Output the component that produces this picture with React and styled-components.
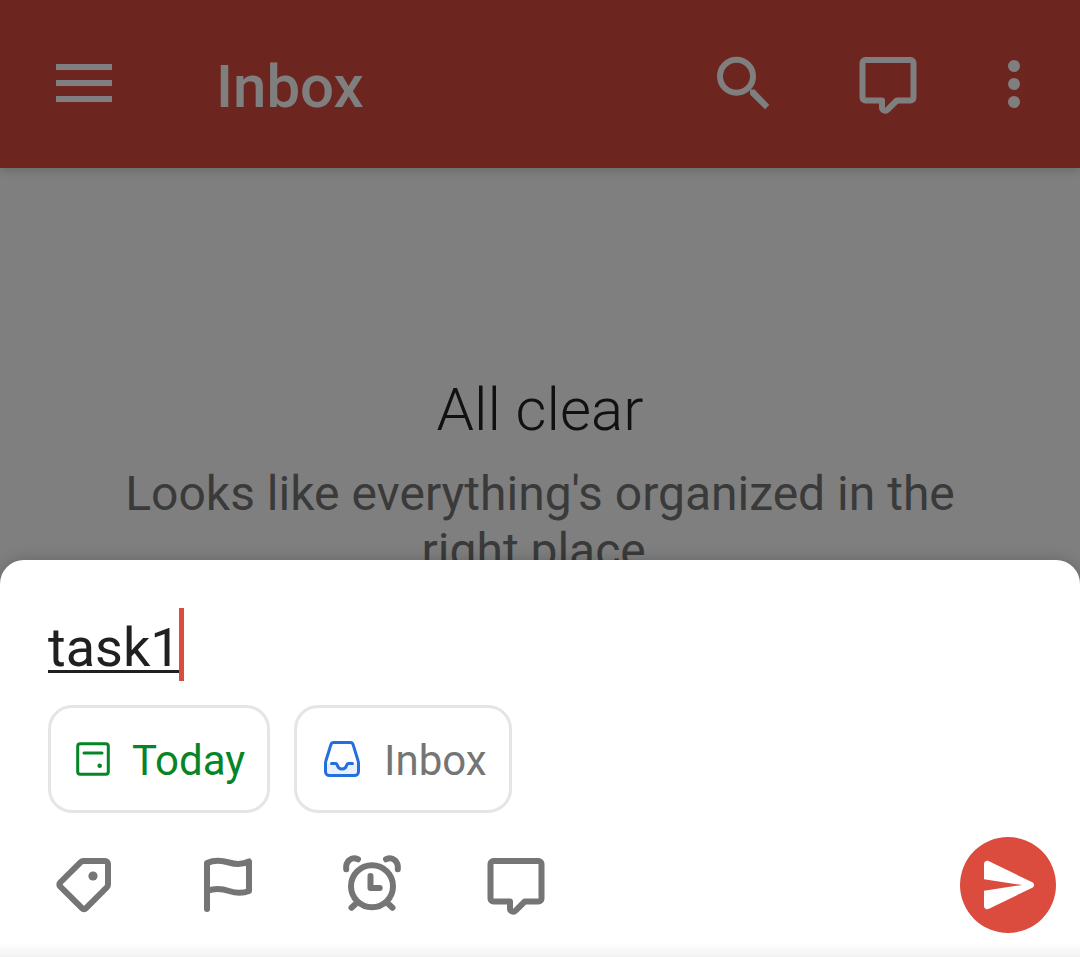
import React, { useState } from 'react';
import styled, { createGlobalStyle } from 'styled-components';

const GlobalStyle = createGlobalStyle`
  *, *::before, *::after { box-sizing: border-box; }
  body {
    margin: 0;
    background: #ffffff;
    font-family: Roboto, "Liberation Sans", sans-serif;
  }
  button, input { font: inherit; }
`;

const Screen = styled.div`
  position: relative;
  display: flex;
  flex-direction: column;
  min-height: 100vh;
  overflow: hidden;
`;

const AppBar = styled.header`
  display: flex;
  align-items: center;
  height: 168px;
  padding: 0 12px;
  background: #db4c3f;
  color: #ffffff;
  box-shadow: 0 2px 10px rgba(0, 0, 0, 0.2);
`;

const Title = styled.h1`
  flex: 1;
  margin: 0 0 0 60px;
  padding-top: 6px;
  font-size: 60px;
  font-weight: 500;
  line-height: 72px;
`;

const IconButton = styled.button`
  display: flex;
  align-items: center;
  justify-content: center;
  flex: none;
  width: ${({ $narrow }) => ($narrow ? '108px' : '144px')};
  height: 96px;
  padding: 0;
  border: 0;
  background: none;
  color: inherit;
  cursor: pointer;
`;

const Icon = styled.svg`
  display: block;
  flex: none;
  width: ${({ $size }) => $size || 72}px;
  height: ${({ $size }) => $size || 72}px;
  fill: none;
  stroke: currentColor;
  stroke-width: ${({ $stroke }) => $stroke || 6};
  stroke-linejoin: round;
  stroke-linecap: ${({ $cap }) => $cap || 'round'};
`;

const EmptyState = styled.main`
  flex: 1;
  padding: 206px 120px 0;
  text-align: center;
`;

const EmptyTitle = styled.h2`
  margin: 0 0 19px;
  color: #222222;
  font-size: 60px;
  font-weight: 300;
  line-height: 72px;
`;

const EmptyText = styled.p`
  margin: 0;
  color: #757575;
  font-size: 48px;
  line-height: 57px;
`;

const Scrim = styled.div`
  position: absolute;
  inset: 0;
  background: rgba(0, 0, 0, 0.5);
`;

const Sheet = styled.form`
  position: absolute;
  right: 0;
  bottom: 0;
  left: 0;
  display: flex;
  flex-direction: column;
  gap: 24px;
  padding: 48px 24px 24px;
  border-radius: 24px 24px 0 0;
  background: linear-gradient(to top, #f2f2f2, #ffffff 14px);
  box-shadow: 0 0 16px rgba(0, 0, 0, 0.2);
`;

const TaskField = styled.div`
  display: flex;
  height: 73px;
  padding: 0 24px;
`;

const TaskInput = styled.input`
  field-sizing: content;
  min-width: 0;
  height: 73px;
  padding: 6px 0 0;
  border: 0;
  outline: 0;
  background: none;
  color: #202020;
  caret-color: transparent;
  font-size: 54px;
  line-height: 67px;
  text-decoration: underline;
  text-decoration-thickness: 3px;
  text-underline-offset: 4px;
  text-decoration-skip-ink: none;
`;

const Caret = styled.span`
  flex: none;
  width: 5px;
  margin-left: -2px;
  background: #db4c3f;
`;

const Chips = styled.div`
  display: flex;
  gap: 24px;
  padding: 0 24px;
`;

const Chip = styled.button`
  display: flex;
  align-items: center;
  gap: 21px;
  height: 108px;
  padding: 0 22px 0 24px;
  border: 3px solid #e5e5e5;
  border-radius: 24px;
  background: #ffffff;
  color: ${({ $color }) => $color};
  font-size: 42px;
  line-height: 50px;
  cursor: pointer;
`;

const ChipLabel = styled.span`
  padding-top: 4px;
`;

const Actions = styled.div`
  display: flex;
  align-items: center;
  margin-left: -12px;
  color: #757575;
`;

const SendButton = styled.button`
  width: 96px;
  height: 96px;
  margin-left: auto;
  padding: 0;
  border: 0;
  border-radius: 50%;
  background: #db4c3f;
  cursor: pointer;
`;

const MenuIcon = () => (
  <Icon viewBox="0 0 72 72" $cap="butt" aria-hidden="true">
    <path d="M8 19H64M8 35H64M8 51H64" />
  </Icon>
);

const SearchIcon = () => (
  <Icon viewBox="0 0 72 72" aria-hidden="true">
    <circle cx="28.5" cy="28.2" r="16.5" />
    <path d="M42 41.500h4.500L61.300 57 57 61.300 42 46.500z" fill="currentColor" stroke="none" />
  </Icon>
);

const CommentIcon = () => (
  <Icon viewBox="0 0 72 72" aria-hidden="true">
    <path d="M13.5 12h45a3 3 0 0 1 3 3v34.500a3 3 0 0 1-3 3H44.800l-9.200 9.100A3.200 3.200 0 0 1 30 59.500V52.500H13.500a3 3 0 0 1-3-3V15a3 3 0 0 1 3-3z" />
  </Icon>
);

const MoreIcon = () => (
  <Icon viewBox="0 0 72 72" aria-hidden="true">
    <g fill="currentColor" stroke="none">
      <circle cx="36" cy="18" r="6" />
      <circle cx="36" cy="36" r="6" />
      <circle cx="36" cy="54" r="6" />
    </g>
  </Icon>
);

const LabelIcon = () => (
  <Icon viewBox="0 0 72 72" aria-hidden="true">
    <path d="M35.500 12H57a3 3 0 0 1 3 3v20.500a4 4 0 0 1-1.200 2.800L37.800 59.400a2.500 2.500 0 0 1-3.600 0L12.100 37.300a2.500 2.500 0 0 1 0-3.600L32.700 13.200a4 4 0 0 1 2.800-1.200z" />
    <circle cx="45" cy="27" r="4.600" fill="currentColor" stroke="none" />
  </Icon>
);

const FlagIcon = () => (
  <Icon viewBox="0 0 72 72" aria-hidden="true">
    <path d="M15 60V14C22 11 30 11.500 37 13.500S51 15.500 57 12.500V42C51 44.500 43 44 37 42S22 39.500 15 42" />
  </Icon>
);

const AlarmIcon = () => (
  <Icon viewBox="0 0 72 72" aria-hidden="true">
    <circle cx="36" cy="37.300" r="21" />
    <path d="M34.500 27V39H43.700M19 55.500L15.500 58.800M53 55.500L56.500 58.800" />
    <path d="M10.200 20.300C9.300 13 15 7 22 10.300M61.800 20.300C62.700 13 57 7 50 10.300" />
  </Icon>
);

const CalendarIcon = () => (
  <Icon viewBox="0 0 36 36" $size={36} $stroke={3} aria-hidden="true">
    <rect x="2.700" y="2.700" width="30.600" height="30.600" rx="2.500" />
    <path d="M9 12H27" />
    <circle cx="24.700" cy="24.700" r="2.300" fill="currentColor" stroke="none" />
  </Icon>
);

const TrayIcon = () => (
  <Icon viewBox="0 0 42 42" $size={42} $stroke={3} aria-hidden="true">
    <path d="M4.500 25.500H14.500c2 0 1.500 5.500 6.500 5.500s4.500-5.500 6.500-5.500H37.500V35l-2.500 2.500H7L4.500 35z" fill="#e9f0fc" stroke="none" />
    <g stroke="#246fe0">
      <path d="M12.800 4.500H29.200a3 3 0 0 1 2.900 2.100L37 22.500a9 9 0 0 1 .5 3V33.500a4 4 0 0 1-4 4H8.500a4 4 0 0 1-4-4V25.500a9 9 0 0 1 .5-3L9.900 6.600a3 3 0 0 1 2.900-2.100z" />
      <path d="M10.500 25.500H14.500c1 0 1.500.5 1.800 1.500.7 2.700 2.200 4 4.700 4s4-1.300 4.700-4c.3-1 .8-1.500 1.800-1.500H31.500" />
    </g>
  </Icon>
);

const SendIcon = () => (
  <Icon viewBox="0 0 96 96" $size={96} aria-hidden="true">
    <path
      d="M24 42.200V27C24 24.500 26.500 23 29 24.300L72.300 45.300C74.700 46.500 74.700 49.500 72.300 50.700L29 71.700C26.500 73 24 71.500 24 69V53.800L62 48z"
      fill="#ffffff"
      stroke="none"
    />
  </Icon>
);

const TASK_ACTIONS = [
  { label: 'Labels', Glyph: LabelIcon },
  { label: 'Priority', Glyph: FlagIcon },
  { label: 'Reminders', Glyph: AlarmIcon },
  { label: 'Comments', Glyph: CommentIcon },
];

export default function App() {
  const [task, setTask] = useState('task1');

  return (
    <>
      <GlobalStyle />
      <Screen>
        <AppBar>
          <IconButton type="button" aria-label="Menu"><MenuIcon /></IconButton>
          <Title>Inbox</Title>
          <IconButton type="button" aria-label="Search"><SearchIcon /></IconButton>
          <IconButton type="button" aria-label="Comments"><CommentIcon /></IconButton>
          <IconButton type="button" aria-label="More options" $narrow><MoreIcon /></IconButton>
        </AppBar>
        <EmptyState>
          <EmptyTitle>All clear</EmptyTitle>
          <EmptyText>Looks like everything's organized in the right place.</EmptyText>
        </EmptyState>
        <Scrim />
        <Sheet onSubmit={(event) => event.preventDefault()}>
          <TaskField>
            <TaskInput
              type="text"
              aria-label="Task name"
              spellCheck={false}
              value={task}
              onChange={(event) => setTask(event.target.value)}
            />
            <Caret />
          </TaskField>
          <Chips>
            <Chip type="button" $color="#058527"><CalendarIcon /><ChipLabel>Today</ChipLabel></Chip>
            <Chip type="button" $color="#757575"><TrayIcon /><ChipLabel>Inbox</ChipLabel></Chip>
          </Chips>
          <Actions>
            {TASK_ACTIONS.map(({ label, Glyph }) => (
              <IconButton key={label} type="button" aria-label={label}><Glyph /></IconButton>
            ))}
            <SendButton type="submit" aria-label="Add task"><SendIcon /></SendButton>
          </Actions>
        </Sheet>
      </Screen>
    </>
  );
}
